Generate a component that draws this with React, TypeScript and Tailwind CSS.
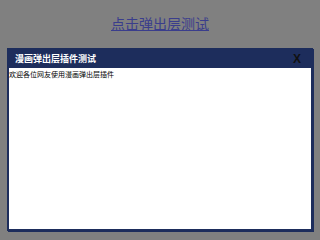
import React from 'react';

const App: React.FC = () => {
  return (
    <div className="min-h-screen bg-[#808080] font-['Liberation_Sans','Noto_Sans_CJK_SC',sans-serif]">
      <div className="pt-[15px] text-center leading-[18px]">
        <a href="#" className="text-[14px] text-[#3a3d8c] underline">
          点击弹出层测试
        </a>
      </div>

      <div className="mx-[7px] mt-[15px] h-[183px] flex flex-col border-2 border-[#1d2d5c] shadow-[1px_1px_0_#1d2d5c]">
        <div className="h-[18px] flex items-center justify-between bg-[#1d2d5c] pl-[6px] pr-[10px]">
          <span className="text-[9px] font-bold text-white leading-none">漫画弹出层插件测试</span>
          <span className="text-[12px] font-bold text-[#111] leading-none">X</span>
        </div>
        <div className="flex-1 bg-white">
          <p className="text-[7px] leading-[9px] text-black pt-[2px]">欢迎各位网友使用漫画弹出层插件</p>
        </div>
      </div>
    </div>
  );
};

export default App;
